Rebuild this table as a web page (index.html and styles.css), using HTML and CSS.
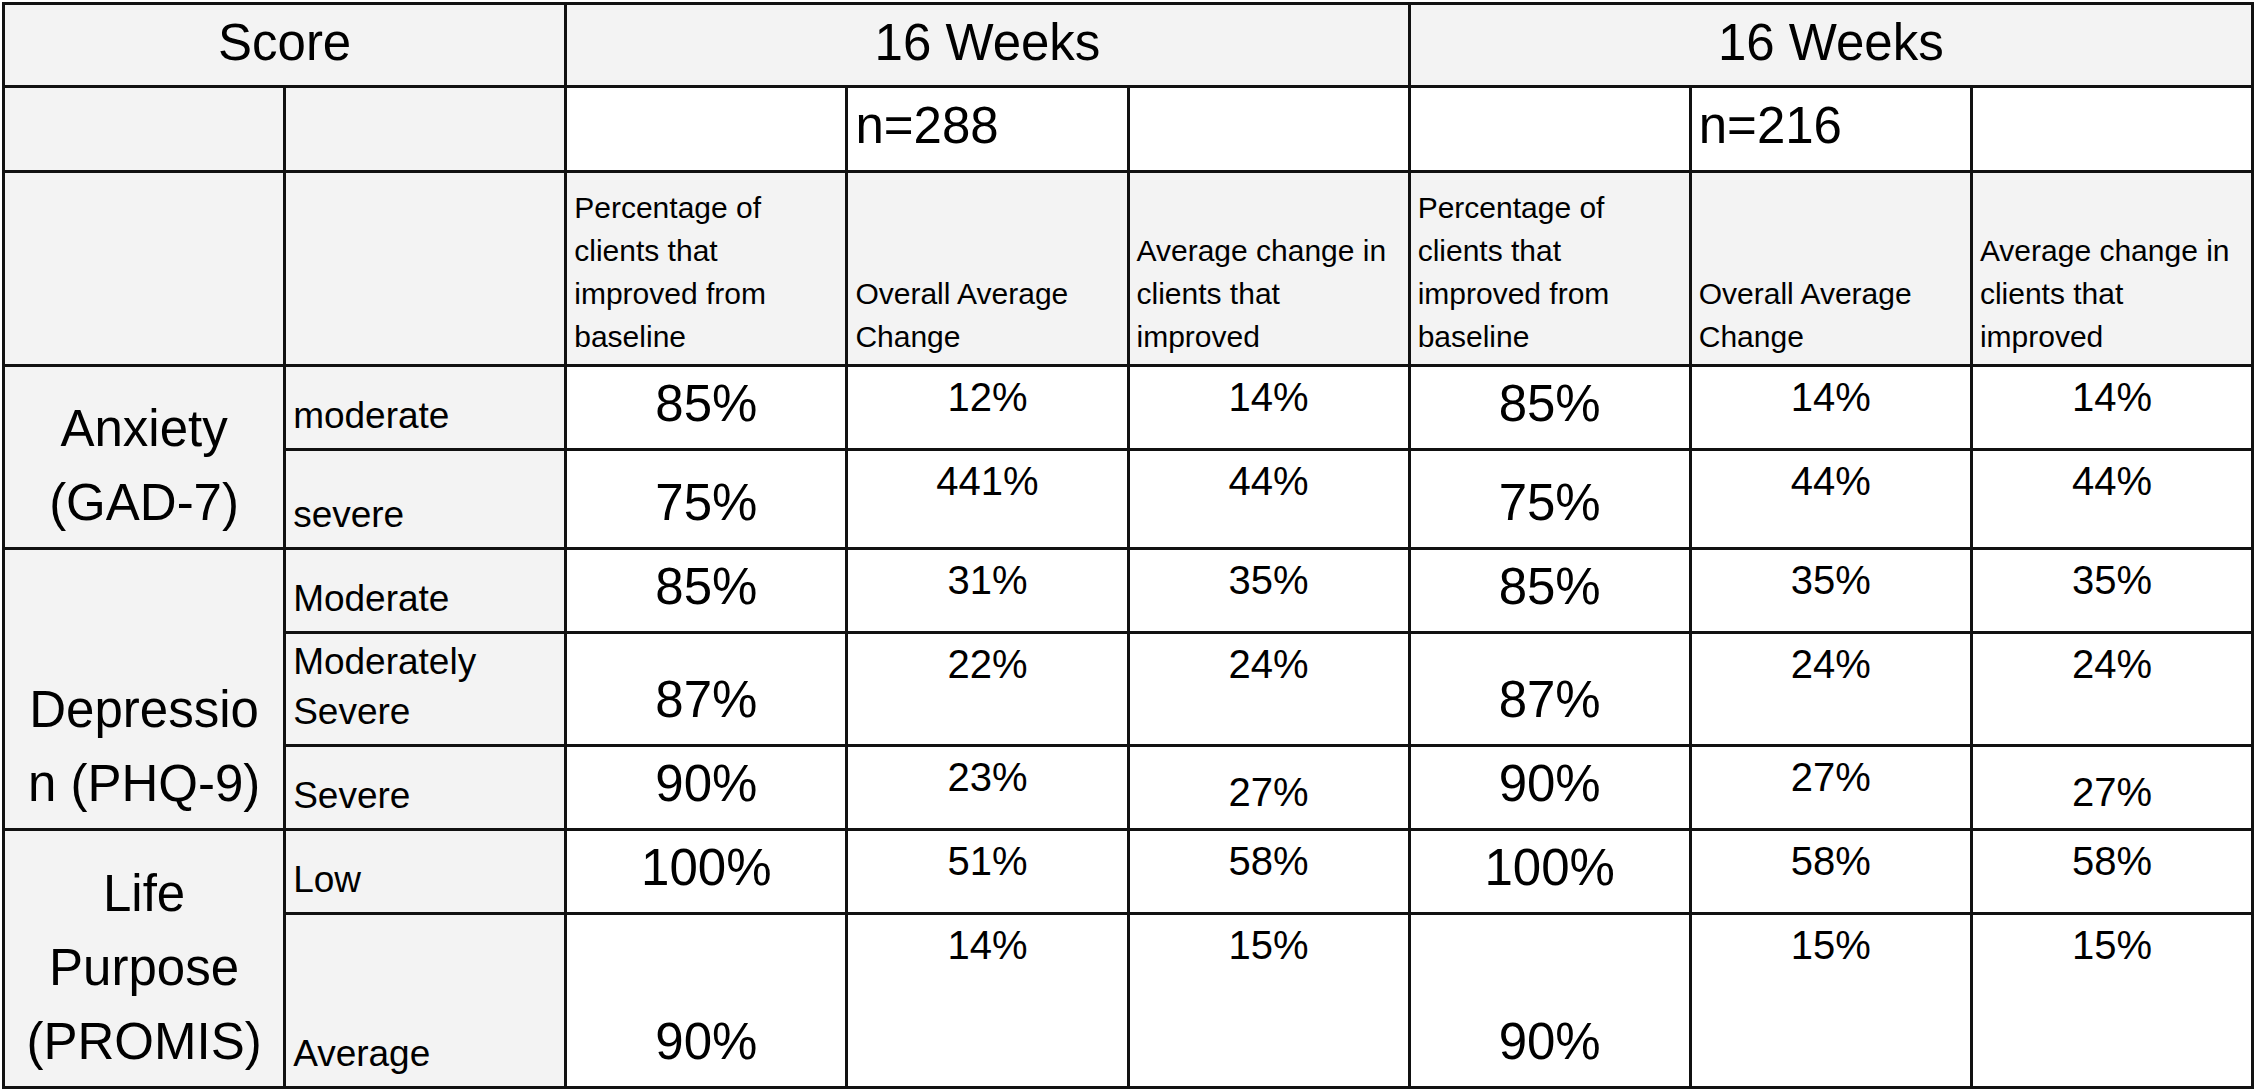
FILE: index.html
```html
<!DOCTYPE html>
<html lang="en">
<head>
<meta charset="utf-8">
<title>Outcomes table</title>
<link rel="stylesheet" href="styles.css">
</head>
<body>
<div class="wrap">
<table class="outcomes">
  <colgroup>
    <col class="c"><col class="c"><col class="c"><col class="c"><col class="c"><col class="c"><col class="c"><col class="c">
  </colgroup>
  <tr class="r-head">
    <td class="head gray" colspan="2">Score</td>
    <td class="head gray" colspan="3">16 Weeks</td>
    <td class="head gray" colspan="3">16 Weeks</td>
  </tr>
  <tr class="r-n">
    <td class="gray"></td>
    <td class="gray"></td>
    <td></td>
    <td class="n">n=288</td>
    <td></td>
    <td></td>
    <td class="n">n=216</td>
    <td></td>
  </tr>
  <tr class="r-desc">
    <td class="gray"></td>
    <td class="gray"></td>
    <td class="desc gray">Percentage of clients that improved from baseline</td>
    <td class="desc gray">Overall Average Change</td>
    <td class="desc gray">Average change in clients that improved</td>
    <td class="desc gray">Percentage of clients that improved from baseline</td>
    <td class="desc gray">Overall Average Change</td>
    <td class="desc gray">Average change in clients that improved</td>
  </tr>
  <tr class="r1">
    <td class="group gray" rowspan="2">Anxiety (GAD-7)</td>
    <td class="level gray">moderate</td>
    <td class="pct">85%</td>
    <td class="val">12%</td>
    <td class="val">14%</td>
    <td class="pct">85%</td>
    <td class="val">14%</td>
    <td class="val">14%</td>
  </tr>
  <tr class="r2">
    <td class="level gray">severe</td>
    <td class="pct">75%</td>
    <td class="val">441%</td>
    <td class="val">44%</td>
    <td class="pct">75%</td>
    <td class="val">44%</td>
    <td class="val">44%</td>
  </tr>
  <tr class="r3">
    <td class="group gray" rowspan="3">Depression (PHQ-9)</td>
    <td class="level gray">Moderate</td>
    <td class="pct">85%</td>
    <td class="val">31%</td>
    <td class="val">35%</td>
    <td class="pct">85%</td>
    <td class="val">35%</td>
    <td class="val">35%</td>
  </tr>
  <tr class="r4">
    <td class="level gray">Moderately Severe</td>
    <td class="pct">87%</td>
    <td class="val">22%</td>
    <td class="val">24%</td>
    <td class="pct">87%</td>
    <td class="val">24%</td>
    <td class="val">24%</td>
  </tr>
  <tr class="r5">
    <td class="level gray">Severe</td>
    <td class="pct">90%</td>
    <td class="val">23%</td>
    <td class="val low">27%</td>
    <td class="pct">90%</td>
    <td class="val">27%</td>
    <td class="val low">27%</td>
  </tr>
  <tr class="r6">
    <td class="group gray" rowspan="2">Life Purpose (PROMIS)</td>
    <td class="level gray">Low</td>
    <td class="pct">100%</td>
    <td class="val">51%</td>
    <td class="val">58%</td>
    <td class="pct">100%</td>
    <td class="val">58%</td>
    <td class="val">58%</td>
  </tr>
  <tr class="r7">
    <td class="level gray">Average</td>
    <td class="pct">90%</td>
    <td class="val">14%</td>
    <td class="val">15%</td>
    <td class="pct">90%</td>
    <td class="val">15%</td>
    <td class="val">15%</td>
  </tr>
</table>
</div>
</body>
</html>
```
FILE: styles.css
```css
html, body {
  margin: 0;
  padding: 0;
  background: #ffffff;
}

.wrap {
  padding: 2px 0 0 2px;
}

.outcomes {
  width: 2252px;
  table-layout: fixed;
  border-collapse: collapse;
  font-family: "Liberation Sans", Arial, sans-serif;
  color: #000;
}

.outcomes .c {
  width: 12.5%;
}

.outcomes td {
  border: 3px solid #111;
  padding: 0 7px;
  background: #ffffff;
  vertical-align: top;
  overflow-wrap: anywhere;
}

.outcomes td.gray {
  background: #f3f3f3;
}

.r-head { height: 83px; }
.r-n { height: 85px; }
.r-desc { height: 194px; }
.r1 { height: 84px; }
.r2 { height: 99px; }
.r3 { height: 84px; }
.r4 { height: 113px; }
.r5 { height: 84px; }
.r6 { height: 84px; }
.r7 { height: 174px; }

.head {
  font-size: 51px;
  line-height: 59px;
  text-align: center;
  vertical-align: middle !important;
  padding-bottom: 5px !important;
}

.n {
  font-size: 51px;
  line-height: 59px;
  vertical-align: middle !important;
  padding-bottom: 7px !important;
}

.desc {
  font-size: 30px;
  line-height: 43px;
  vertical-align: bottom !important;
  padding-bottom: 6px !important;
}

.group {
  font-size: 51px;
  line-height: 74px;
  text-align: center;
  vertical-align: bottom !important;
  padding: 0 18px 7px !important;
}

.level {
  font-size: 37px;
  line-height: 50px;
  vertical-align: bottom !important;
  padding-bottom: 7px !important;
}

.pct {
  font-size: 51px;
  line-height: 74px;
  text-align: center;
  vertical-align: bottom !important;
  padding-bottom: 7px !important;
}

.val {
  font-size: 40px;
  line-height: 54px;
  text-align: center;
  padding-top: 3px !important;
}

.val.low {
  padding-top: 18px !important;
}
```
